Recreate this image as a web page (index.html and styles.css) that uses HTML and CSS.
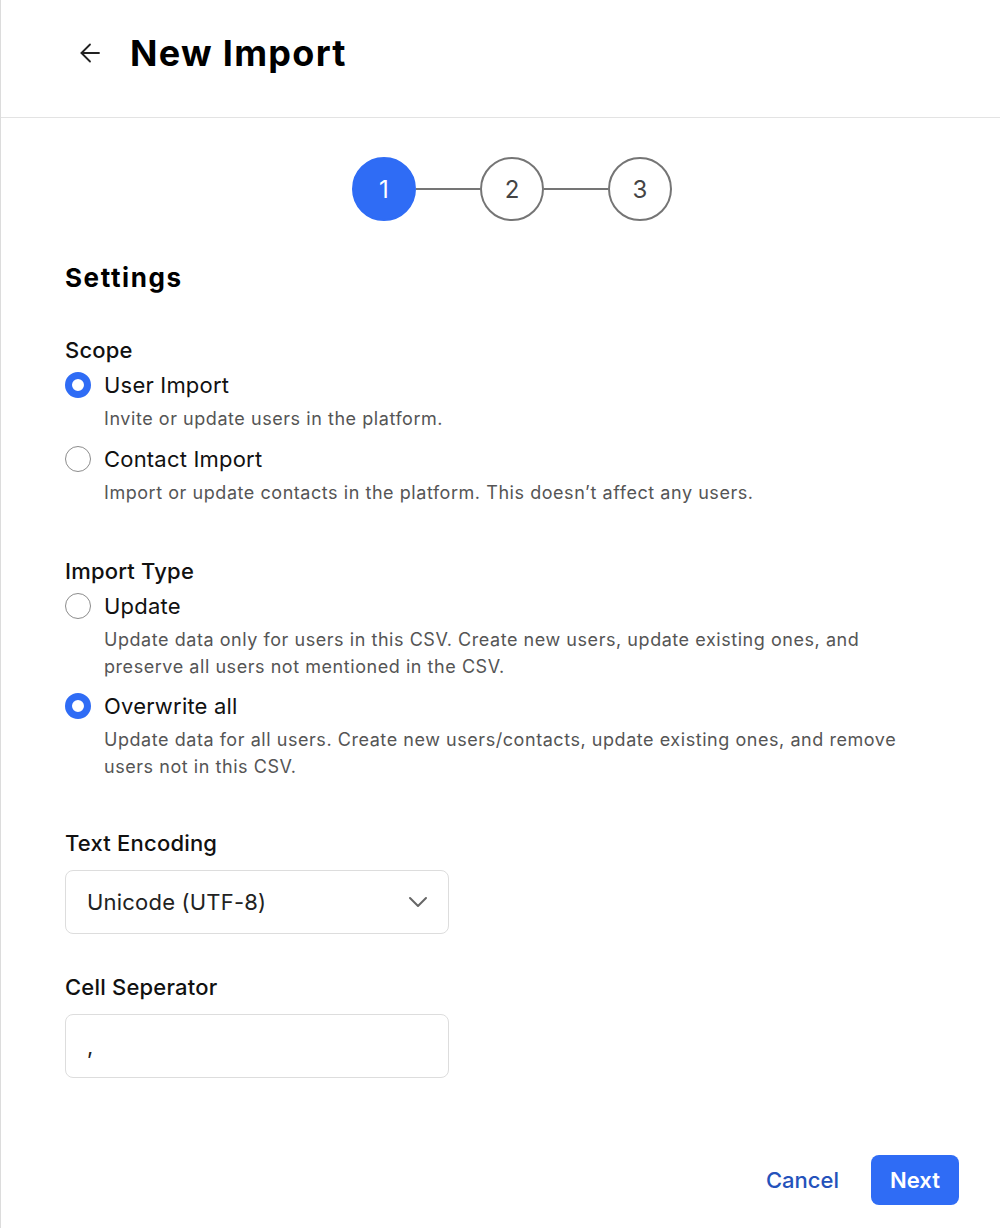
FILE: index.html
```html
<!DOCTYPE html>
<html lang="en">
<head>
  <meta charset="UTF-8">
  <meta name="viewport" content="width=device-width, initial-scale=1.0">
  <title>New Import</title>
  <link rel="stylesheet" href="styles.css">
</head>
<body>
  <div class="page">
    <!-- Header -->
    <div class="header">
      <button class="back" aria-label="Back">
        <svg width="20" height="20" viewBox="0 0 20 20" fill="none" stroke="#222" stroke-width="1.8" stroke-linecap="round" stroke-linejoin="round">
          <path d="M19 10H1.5"/>
          <path d="M10 1.5L1.5 10L10 18.5"/>
        </svg>
      </button>
      <h1>New Import</h1>
    </div>

    <div class="content">
      <!-- Stepper -->
      <div class="stepper">
        <div class="step active">1</div>
        <div class="step-line"></div>
        <div class="step">2</div>
        <div class="step-line"></div>
        <div class="step">3</div>
      </div>

      <h2>Settings</h2>

      <!-- Scope -->
      <div class="field first">
        <div class="field-label">Scope</div>
        <div class="options scope">
          <label class="option">
            <span class="radio checked"></span>
            <span class="option-title">User Import</span>
            <span class="option-desc">Invite or update users in the platform.</span>
          </label>
          <label class="option">
            <span class="radio"></span>
            <span class="option-title">Contact Import</span>
            <span class="option-desc">Import or update contacts in the platform. This doesn’t affect any users.</span>
          </label>
        </div>
      </div>

      <!-- Import Type -->
      <div class="field">
        <div class="field-label">Import Type</div>
        <div class="options">
          <label class="option">
            <span class="radio"></span>
            <span class="option-title">Update</span>
            <span class="option-desc">Update data only for users in this CSV. Create new users, update existing ones, and preserve all users not mentioned in the CSV.</span>
          </label>
          <label class="option">
            <span class="radio checked"></span>
            <span class="option-title">Overwrite all</span>
            <span class="option-desc">Update data for all users. Create new users/contacts, update existing ones, and remove users not in this CSV.</span>
          </label>
        </div>
      </div>

      <!-- Text Encoding -->
      <div class="field encoding">
        <div class="field-label">Text Encoding</div>
        <div class="select">
          <span>Unicode (UTF-8)</span>
          <svg width="20" height="12" viewBox="0 0 20 12" fill="none" stroke="#666" stroke-width="2" stroke-linecap="round" stroke-linejoin="round">
            <path d="M2 2L10 10L18 2"/>
          </svg>
        </div>
      </div>

      <!-- Cell Separator -->
      <div class="field separator">
        <div class="field-label">Cell Seperator</div>
        <div class="text-input">,</div>
      </div>

      <div class="actions">
        <button class="btn-link">Cancel</button>
        <button class="btn-primary">Next</button>
      </div>
    </div>
  </div>
</body>
</html>
```

FILE: styles.css
```css
body {
  margin: 0;
  font-family: Inter, "Noto Sans", sans-serif;
  color: #111;
  background: #fff;
}
.page {
  min-height: 1228px;
  border-left: 1px solid #dcdcdc;
  box-sizing: border-box;
}
.header {
  height: 118px;
  box-sizing: border-box;
  border-bottom: 1px solid #e3e3e3;
  display: flex;
  align-items: flex-start;
  padding: 31px 0 0 79px;
}
.back {
  background: none;
  border: none;
  padding: 0;
  width: 24px;
  height: 44px;
  display: flex;
  align-items: center;
  cursor: pointer;
}
.header h1 {
  margin: 0 0 0 26px;
  font-size: 36px;
  line-height: 44px;
  font-weight: 700;
  color: #000;
  letter-spacing: 1.3px;
}
.content {
  padding: 39px 41px 0 64px;
}
.stepper {
  display: flex;
  justify-content: center;
  align-items: center;
}
.step {
  width: 64px;
  height: 64px;
  box-sizing: border-box;
  border: 2px solid #757575;
  border-radius: 50%;
  display: flex;
  align-items: center;
  justify-content: center;
  font-size: 24px;
  color: #444;
}
.step.active {
  background: #2f6cf5;
  border-color: #2f6cf5;
  color: #fff;
}
.step-line {
  width: 64px;
  height: 2px;
  background: #757575;
}
h2 {
  margin: 41px 0 0;
  font-size: 26px;
  line-height: 32px;
  font-weight: 700;
  color: #000;
  letter-spacing: 1.6px;
}
.field {
  margin-top: 51px;
}
.field.first {
  margin-top: 42px;
}
.field.encoding {
  margin-top: 49px;
}
.field.separator {
  margin-top: 39px;
}
.field-label {
  font-size: 22px;
  line-height: 28px;
  font-weight: 500;
  color: #111;
  letter-spacing: 0.2px;
}
.options {
  margin-top: 7px;
  display: flex;
  flex-direction: column;
  gap: 12px;
}
.options.scope {
  gap: 13px;
}
.option {
  display: grid;
  grid-template-columns: 26px 1fr;
  column-gap: 13px;
  row-gap: 6px;
  align-items: center;
}
.radio {
  width: 26px;
  height: 26px;
  box-sizing: border-box;
  border: 1px solid #8c8c8c;
  border-radius: 50%;
  background: #fff;
}
.radio.checked {
  border: 7px solid #2f6cf5;
}
.option-title {
  font-size: 22px;
  line-height: 28px;
  color: #111;
  letter-spacing: 0.2px;
}
.option-desc {
  grid-column: 2;
  font-size: 18px;
  line-height: 27px;
  color: #555;
  letter-spacing: 0.55px;
  max-width: 815px;
}
.select,
.text-input {
  margin-top: 13px;
  width: 384px;
  height: 64px;
  box-sizing: border-box;
  border: 1px solid #dddddd;
  border-radius: 8px;
  padding: 0 20px 0 21px;
  display: flex;
  align-items: center;
  justify-content: space-between;
  font-size: 22px;
  color: #222;
  letter-spacing: 0.2px;
}
.actions {
  margin-top: 77px;
  display: flex;
  justify-content: flex-end;
  align-items: center;
  gap: 32px;
}
.btn-link {
  background: none;
  border: none;
  padding: 0;
  font-family: inherit;
  font-size: 22px;
  font-weight: 500;
  color: #2452bb;
  cursor: pointer;
}
.btn-primary {
  width: 88px;
  height: 50px;
  border: none;
  border-radius: 8px;
  background: #2f6cf5;
  color: #fff;
  font-family: inherit;
  font-size: 22px;
  font-weight: 600;
  cursor: pointer;
}
```
